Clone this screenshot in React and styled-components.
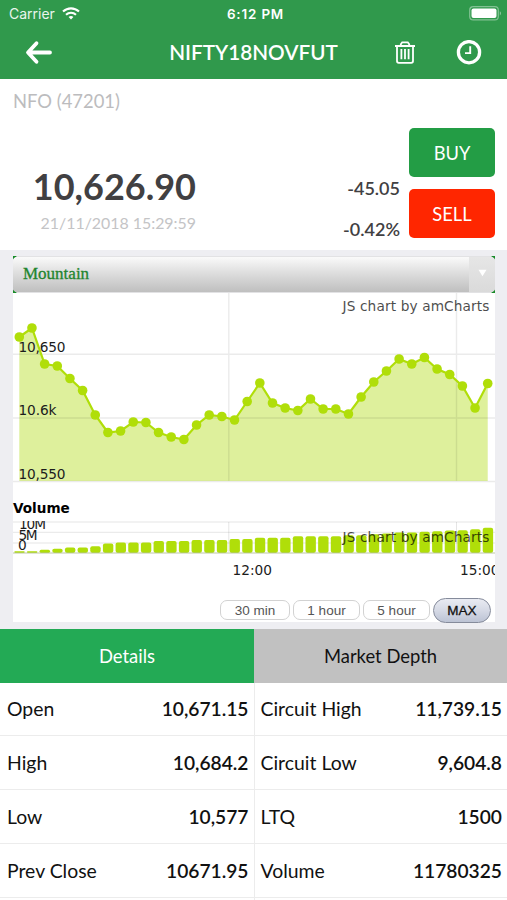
import { useState } from "react";
import styled, { createGlobalStyle } from "styled-components";

const STEP = 12.66;

// y position of every point in the price plot
const prices = [
    44, 35, 71, 73, 85.5, 97.5, 122, 139.5, 138, 129, 129.5, 139.5, 144, 146.5, 132, 122, 123.5, 127, 108.5,
    90, 110, 115, 117.5, 106, 116, 116, 121, 104, 89, 78, 66, 71, 64.5, 76, 81.5, 93, 115, 90.5,
];

// bar heights of the volume plot
const volumes = [
    1.6, 1.6, 3, 4, 5.4, 5.4, 6.6, 9.4, 10.4, 10.4, 10.4, 11.7, 11.7, 11.7, 12.7, 12.7, 12.7, 13.7, 13.7,
    15, 15, 15, 16.6, 16.6, 16.6, 16.6, 17.6, 17.6, 18.6, 19.3, 20.2, 20.2, 21, 21.6, 22.2, 22.6, 23.6, 25,
];

const periods = ["30 min", "1 hour", "5 hour", "MAX"];

const leftRows = [
    ["Open", "10,671.15"],
    ["High", "10,684.2"],
    ["Low", "10,577"],
    ["Prev Close", "10671.95"],
    ["", ""],
];

const rightRows = [
    ["Circuit High", "11,739.15"],
    ["Circuit Low", "9,604.8"],
    ["LTQ", "1500"],
    ["Volume", "11780325"],
    ["", ""],
];

const pointX = (i) => 6.3 + i * STEP;

export default function App() {
    const [period, setPeriod] = useState("MAX");
    const [tab, setTab] = useState("Details");

    return (
        <>
            <GlobalStyle />
            <Screen>
                <StatusBar>
                    <Carrier>Carrier <WifiIcon /></Carrier>
                    <Clock>6:12 PM</Clock>
                    <BatteryIcon />
                </StatusBar>
                <Header>
                    <BackIcon />
                    <Title>NIFTY18NOVFUT</Title>
                    <Actions>
                        <TrashIcon />
                        <HistoryIcon />
                    </Actions>
                </Header>

                <Quote>
                    <Exchange>NFO (47201)</Exchange>
                    <QuoteBody>
                        <PriceBox>
                            <Price>10,626.90</Price>
                            <PriceDate>21/11/2018 15:29:59</PriceDate>
                        </PriceBox>
                        <Changes>
                            <span>-45.05</span>
                            <span>-0.42%</span>
                        </Changes>
                        <Orders>
                            <OrderButton $color="#239d45">BUY</OrderButton>
                            <OrderButton $color="#ff2600">SELL</OrderButton>
                        </Orders>
                    </QuoteBody>
                </Quote>

                <ChartArea>
                    <ChartSelect>
                        <SelectLabel>Mountain</SelectLabel>
                        <SelectArrow><svg width="9" height="8" viewBox="0 0 10 8"><path d="M0.5 0.5h9L5 7.5z" fill="#fff" /></svg></SelectArrow>
                    </ChartSelect>
                    <ChartPanel>
                        <PriceChart />
                        <VolumeTitle>Volume</VolumeTitle>
                        <VolumeChart />
                        <Periods>
                            {periods.map((p) => (
                                <PeriodButton key={p} $active={p === period} onClick={() => setPeriod(p)}>{p}</PeriodButton>
                            ))}
                        </Periods>
                    </ChartPanel>
                </ChartArea>

                <Tabs>
                    {["Details", "Market Depth"].map((t) => (
                        <Tab key={t} $active={t === tab} onClick={() => setTab(t)}>{t}</Tab>
                    ))}
                </Tabs>
                <Table>
                    <Column>
                        {leftRows.map(([name, value]) => <Row key={name}>{name}<b>{value}</b></Row>)}
                    </Column>
                    <Column>
                        {rightRows.map(([name, value]) => <Row key={name}>{name}<b>{value}</b></Row>)}
                    </Column>
                </Table>
            </Screen>
        </>
    );
}

function PriceChart() {
    const line = prices.map((y, i) => `${pointX(i)},${y}`).join(" ");

    return (
        <Plot width="482" height="204" viewBox="0 0 482 204">
            <polygon points={`${pointX(0)},188 ${line} ${pointX(37)},188`} fill="#def09c" />
            <g stroke="#000" strokeOpacity="0.08" strokeWidth="1.4">
                <path d="M0 61.3H482M0 125H482M0 188.5H482M215.8 0V188M443.5 0V188" />
            </g>
            <polyline points={line} fill="none" stroke="#b0de09" strokeWidth="2.2" />
            {prices.map((y, i) => <circle key={i} cx={pointX(i)} cy={y} r="4.8" fill="#b0de09" />)}
            <text x="5.5" y="59" textLength="47">10,650</text>
            <text x="5.5" y="122.3" textLength="38">10.6k</text>
            <text x="5.5" y="186" textLength="47">10,550</text>
            <Credit x="329.5" y="18" textLength="147">JS chart by amCharts</Credit>
        </Plot>
    );
}

function VolumeChart() {
    return (
        <Plot width="482" height="66" viewBox="0 0 482 66">
            <path d="M0 1H482M0 11.3H482M0 22H482M215.8 1V31M443.5 1V31" stroke="#000" strokeOpacity="0.1" />
            {volumes.map((h, i) => (
                <rect key={i} x={pointX(i) - 5} y={31.8 - h} width="10.4" height={h} rx={Math.min(2, h / 2)} fill="#b0de09" />
            ))}
            <path d="M0 32H482" stroke="#8a9a60" strokeOpacity="0.7" strokeWidth="0.8" />
            <text x="6" y="8.3" textLength="27">10M</text>
            <text x="5.5" y="19" textLength="19">5M</text>
            <text x="5" y="29">0</text>
            <Credit x="329.5" y="21" textLength="147">JS chart by amCharts</Credit>
            <text x="219.5" y="53.5" textLength="39.5">12:00</text>
            <text x="447" y="53.5" textLength="39.5">15:00</text>
        </Plot>
    );
}

function WifiIcon() {
    return (
        <svg width="18" height="13" viewBox="0 0 18 13" fill="none" stroke="#fff" strokeWidth="2.1">
            <path d="M1 4.6C5.6.3 12.4.3 17 4.6" />
            <path d="M4 7.8c2.9-2.7 7.1-2.7 10 0" />
            <path d="M6.6 10L9 12.5 11.4 10C10 8.8 8 8.8 6.6 10z" fill="#fff" stroke="none" />
        </svg>
    );
}

function BatteryIcon() {
    return (
        <svg width="33" height="15" viewBox="0 0 33 15">
            <rect x="0.7" y="0.7" width="28.6" height="13.2" rx="3.5" fill="none" stroke="#fff" strokeOpacity="0.4" strokeWidth="1.2" />
            <rect x="2.5" y="2.4" width="25" height="9.7" rx="2" fill="#fff" />
            <path d="M30.8 5.2c1.6.7 1.6 3.5 0 4.2z" fill="#fff" fillOpacity="0.45" />
        </svg>
    );
}

function BackIcon() {
    return (
        <svg width="28" height="26" viewBox="0 0 28 26" fill="none" stroke="#fff" strokeWidth="3.8" strokeLinecap="round" strokeLinejoin="round">
            <path d="M11.5 3.2L3 12.5l8.5 9.3M3.5 12.5H25" />
        </svg>
    );
}

function TrashIcon() {
    return (
        <svg width="22" height="24" viewBox="0 0 22 24" fill="none" stroke="#fff" strokeWidth="1.8">
            <path d="M1 5h20M3 5.5v14.6c0 1 .7 1.7 1.7 1.7h12.6c1 0 1.7-.7 1.7-1.7V5.5M6.8 5V3.2L8.2 1.3h5.6l1.4 1.9V5" />
            <path d="M7.4 8v10.3M11 8v10.3M14.6 8v10.3" />
        </svg>
    );
}

function HistoryIcon() {
    return (
        <svg width="26" height="26" viewBox="0 0 26 26" fill="none" stroke="#fff">
            <circle cx="13" cy="12.2" r="10.6" strokeWidth="3.3" />
            <path d="M14.2 6.2v6.9H9" strokeWidth="1.9" />
        </svg>
    );
}

const GlobalStyle = createGlobalStyle`
    * {
        box-sizing: border-box;
    }
    body {
        margin: 0;
        overflow: hidden;
        background: #fff;
        font-family: Lato, sans-serif;
    }
    button {
        border: none;
        padding: 0;
        margin: 0;
        font-family: inherit;
    }
    svg {
        display: block;
        flex-shrink: 0;
    }
`

const Screen = styled.div`
    width: 507px;
    height: 900px;
    overflow: hidden;
`

const StatusBar = styled.div`
    display: grid;
    grid-template-columns: 1fr auto 1fr;
    align-items: center;
    height: 27px;
    padding: 0 5px 0 9px;
    background: #30994c;
    color: #fff;
    font-family: Inter, sans-serif;
    font-size: 14px;

    > svg {
        justify-self: end;
    }
`

const Carrier = styled.div`
    display: flex;
    align-items: center;
    gap: 7px;
    color: #e9f5ec;
`

const Clock = styled.div`
    font-weight: 600;
    font-size: 13.4px;
    letter-spacing: 0.85px;
`

const Header = styled.div`
    display: grid;
    grid-template-columns: 1fr auto 1fr;
    align-items: center;
    height: 52px;
    padding: 0 25px;
    background: #30994c;
    color: #fff;
`

const Title = styled.div`
    padding-bottom: 2px;
    font-weight: 600;
    font-size: 20.7px;
`

const Actions = styled.div`
    display: flex;
    align-items: center;
    justify-content: flex-end;
    gap: 40px;
`

const Quote = styled.div`
    height: 171px;
    padding: 11px 12px 0 13px;
`

const Exchange = styled.div`
    height: 38px;
    color: #bcbcbe;
    font-size: 18.4px;
    line-height: 22px;
`

const QuoteBody = styled.div`
    display: flex;
`

const PriceBox = styled.div`
    display: flex;
    flex-direction: column;
    align-items: flex-end;
    width: 183px;
    padding-top: 36px;
`

const Price = styled.div`
    color: #414042;
    font-weight: 700;
    font-size: 36px;
    line-height: 44px;
`

const PriceDate = styled.div`
    color: #c4c4c6;
    font-size: 15.9px;
    line-height: 29px;
`

const Changes = styled.div`
    display: flex;
    flex: 1;
    flex-direction: column;
    align-items: flex-end;
    gap: 17px;
    padding: 48px 9px 0 0;
    color: #414042;
    font-weight: 600;
    font-size: 18px;
    line-height: 24px;
`

const Orders = styled.div`
    display: flex;
    flex-direction: column;
    gap: 12px;
    width: 86px;
`

const OrderButton = styled.button`
    height: 49px;
    border-radius: 5px;
    background: ${(props) => props.$color};
    color: #fff;
    font-size: 18.3px;
`

const ChartArea = styled.div`
    height: 379px;
    padding: 6px 12px 0 13px;
    background: #eeeef2;
`

const ChartSelect = styled.div`
    display: flex;
    height: 37px;
    padding: 1px 0;
    background:
        linear-gradient(135deg, #178a28 2.5px, transparent 3px) left top / 4px 4px no-repeat,
        linear-gradient(225deg, #178a28 2.5px, transparent 3px) right top / 4px 4px no-repeat,
        linear-gradient(45deg, #178a28 2.5px, transparent 3px) left bottom / 4px 4px no-repeat,
        linear-gradient(315deg, #178a28 2.5px, transparent 3px) right bottom / 4px 4px no-repeat,
        #e2e2e4;
`

const SelectLabel = styled.div`
    flex: 1;
    padding-left: 10px;
    border-radius: 4px 0 0 4px;
    background: linear-gradient(#fafafa, #dedede 45%, #bfbfbf);
    color: #22852e;
    font-family: "Liberation Serif", serif;
    font-size: 17px;
    line-height: 33px;
    -webkit-text-stroke: 0.3px #22852e;
`

const SelectArrow = styled.div`
    display: flex;
    align-items: center;
    justify-content: center;
    width: 26px;
    padding-bottom: 3px;
    border-radius: 0 4px 4px 0;
    background: linear-gradient(#e6e6e6, #dadada);
`

const ChartPanel = styled.div`
    height: 329px;
    background: #fff;
`

const Plot = styled.svg`
    font-family: "DejaVu Sans", sans-serif;
    font-size: 13.7px;

    text {
        fill: #1c1c1c;
    }
`

const Credit = styled.text`
    && {
        fill: #000;
        opacity: 0.7;
    }
`

const VolumeTitle = styled.div`
    height: 24px;
    font-family: "DejaVu Sans", sans-serif;
    font-weight: 700;
    font-size: 13.6px;
    line-height: 22px;
`

const Periods = styled.div`
    display: flex;
    align-items: center;
    justify-content: flex-end;
    gap: 3px;
    height: 46px;
    padding: 0 4px 0 0;
`

const PeriodButton = styled.button`
    width: ${(props) => props.$active ? "58px" : props.children === "30 min" ? "70px" : "67px"};
    height: ${(props) => props.$active ? "25px" : "20px"};
    border: ${(props) => props.$active ? "1px solid #858b9b" : "1.5px solid #d2d2d2"};
    border-radius: ${(props) => props.$active ? "13px" : "7px"};
    background: ${(props) => props.$active ? "linear-gradient(#e9ebf2, #d5d9e5 50%, #bcc3d4)" : "#fff"};
    color: ${(props) => props.$active ? "#111" : "#555"};
    font-family: "Liberation Sans", sans-serif;
    font-size: 13.5px;
    -webkit-text-stroke: ${(props) => props.$active ? "0.3px #111" : "0"};
`

const Tabs = styled.div`
    display: grid;
    grid-template-columns: 254px 253px;
    height: 53.5px;
`

const Tab = styled.button`
    background: ${(props) => props.$active ? "#23aa55" : "#c1c1c1"};
    color: ${(props) => props.$active ? "#fff" : "#111"};
    font-size: 18.4px;
`

const Table = styled.div`
    display: grid;
    grid-template-columns: 253.5px 253.5px;
`

const Column = styled.div`
    & + & {
        border-left: 1px solid #ececec;
    }
`

const Row = styled.div`
    display: flex;
    align-items: center;
    justify-content: space-between;
    height: 53.8px;
    padding: 0 5px 0 7px;
    border-bottom: 1.5px solid #ececec;
    color: #111;
    font-size: 19.4px;

    ${Column} + ${Column} & {
        padding-left: 6px;
    }

    b {
        font-weight: 600;
        font-size: 19.2px;
    }
`
